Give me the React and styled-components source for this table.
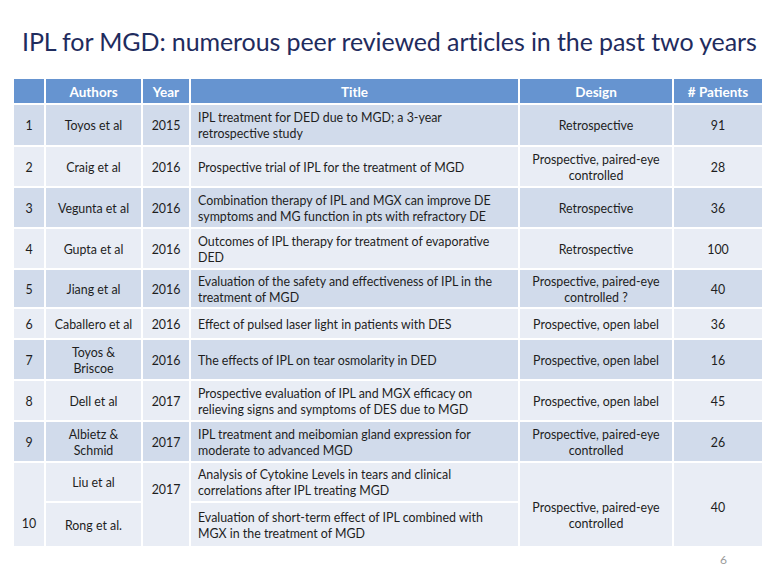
import React from 'react';
import styled, { createGlobalStyle } from 'styled-components';

const GlobalStyle = createGlobalStyle`
  html, body {
    margin: 0;
    padding: 0;
    background: #ffffff;
  }
  body {
    font-family: Lato, "Open Sans", "Liberation Sans", sans-serif;
  }
`;

const Slide = styled.div`
  position: relative;
  width: 775px;
  height: 566px;
  box-sizing: border-box;
  padding: 26px 13px 0 14px;
  background: #ffffff;
  overflow: hidden;
`;

const Title = styled.h1`
  margin: 0 0 0 8px;
  font-family: Lato, "Open Sans", sans-serif;
  font-weight: 400;
  font-size: 25px;
  line-height: 30px;
  letter-spacing: -0.1px;
  color: #1f2c5e;
  white-space: nowrap;
`;

const Table = styled.div`
  display: grid;
  margin-top: 23px;
  grid-template-columns: 30px 95px 46px 327px 152px 88px;
  grid-template-rows: 24px 40px 39px 39px 39px 37px 29px 39px 39px 39px 38px 43px;
  gap: 2px;
  width: 748px;
  background: #ffffff;
`;

const HeadCell = styled.div`
  display: flex;
  align-items: center;
  justify-content: center;
  padding-top: 1px;
  background: #6694d0;
  color: #ffffff;
  font-weight: 700;
  font-size: 13.5px;
`;

const Cell = styled.div`
  display: flex;
  align-items: ${p => p.$valign || 'center'};
  justify-content: ${p => (p.$left ? 'flex-start' : 'center')};
  box-sizing: border-box;
  padding: ${p => p.$pad || (p.$left ? '2px 6px 0 7px' : '2px 3px 0')};
  background: ${p => (p.$odd ? '#d1dbeb' : '#e9edf5')};
  color: #1e1e1e;
  font-size: 12.4px;
  line-height: 16px;
  text-align: ${p => (p.$left ? 'left' : 'center')};
  grid-row: ${p => p.$row || 'auto'};
  grid-column: ${p => p.$col || 'auto'};
`;

const Authors = styled.span`
  display: block;
  max-width: ${p => (p.$narrow ? '70px' : 'none')};
`;

const PageNumber = styled.div`
  position: absolute;
  right: 48px;
  bottom: -2px;
  font-size: 12px;
  line-height: 16px;
  color: #9a9a9a;
`;

const headers = ['', 'Authors', 'Year', 'Title', 'Design', '# Patients'];

const rows = [
  ['1', 'Toyos et al', '2015', 'IPL treatment for DED due to MGD; a 3-year retrospective study', 'Retrospective', '91'],
  ['2', 'Craig et al', '2016', 'Prospective trial of IPL for the treatment of MGD', 'Prospective, paired-eye controlled', '28'],
  ['3', 'Vegunta et al', '2016', 'Combination therapy of IPL and MGX can improve DE symptoms and MG function in pts with refractory DE', 'Retrospective', '36'],
  ['4', 'Gupta et al', '2016', 'Outcomes of IPL therapy for treatment of evaporative DED', 'Retrospective', '100'],
  ['5', 'Jiang et al', '2016', 'Evaluation of the safety and effectiveness of IPL in the treatment of MGD', 'Prospective, paired-eye controlled ?', '40'],
  ['6', 'Caballero et al', '2016', 'Effect of pulsed laser light in patients with DES', 'Prospective, open label', '36'],
  ['7', 'Toyos & Briscoe', '2016', 'The effects of IPL on tear osmolarity in DED', 'Prospective, open label', '16'],
  ['8', 'Dell et al', '2017', 'Prospective evaluation of IPL and MGX efficacy on relieving signs and symptoms of DES due to MGD', 'Prospective, open label', '45'],
  ['9', 'Albietz & Schmid', '2017', 'IPL treatment and meibomian gland expression for moderate to advanced MGD', 'Prospective, paired-eye controlled', '26'],
];

export default function App() {
  return (
    <>
      <GlobalStyle />
      <Slide>
        <Title>IPL for MGD: numerous peer reviewed articles in the past two years</Title>
        <Table>
          {headers.map((h, i) => (
            <HeadCell key={'h' + i}>{h}</HeadCell>
          ))}
          {rows.map((r, i) => {
            const odd = i % 2 === 0;
            return (
              <React.Fragment key={r[0]}>
                <Cell $odd={odd}>{r[0]}</Cell>
                <Cell $odd={odd}>
                  <Authors $narrow={r[1].includes('&')}>{r[1]}</Authors>
                </Cell>
                <Cell $odd={odd}>{r[2]}</Cell>
                <Cell $odd={odd} $left>{r[3]}</Cell>
                <Cell $odd={odd}>{r[4]}</Cell>
                <Cell $odd={odd}>{r[5]}</Cell>
              </React.Fragment>
            );
          })}
          {/* study 10 is split over two author rows */}
          <Cell $col="1" $row="11 / span 2" $valign="flex-end" $pad="0 0 14px">10</Cell>
          <Cell $col="2" $row="11">Liu et al</Cell>
          <Cell $col="3" $row="11 / span 2" $valign="flex-start" $pad="19px 0 0">2017</Cell>
          <Cell $col="4" $row="11" $left>Analysis of Cytokine Levels in tears and clinical correlations after IPL treating MGD</Cell>
          <Cell $col="5" $row="11 / span 2" $pad="22px 3px 0">Prospective, paired-eye controlled</Cell>
          <Cell $col="6" $row="11 / span 2" $valign="flex-start" $pad="37px 0 0">40</Cell>
          <Cell $col="2" $row="12">Rong et al.</Cell>
          <Cell $col="4" $row="12" $left>Evaluation of short-term effect of IPL combined with MGX in the treatment of MGD</Cell>
        </Table>
        <PageNumber>6</PageNumber>
      </Slide>
    </>
  );
}
